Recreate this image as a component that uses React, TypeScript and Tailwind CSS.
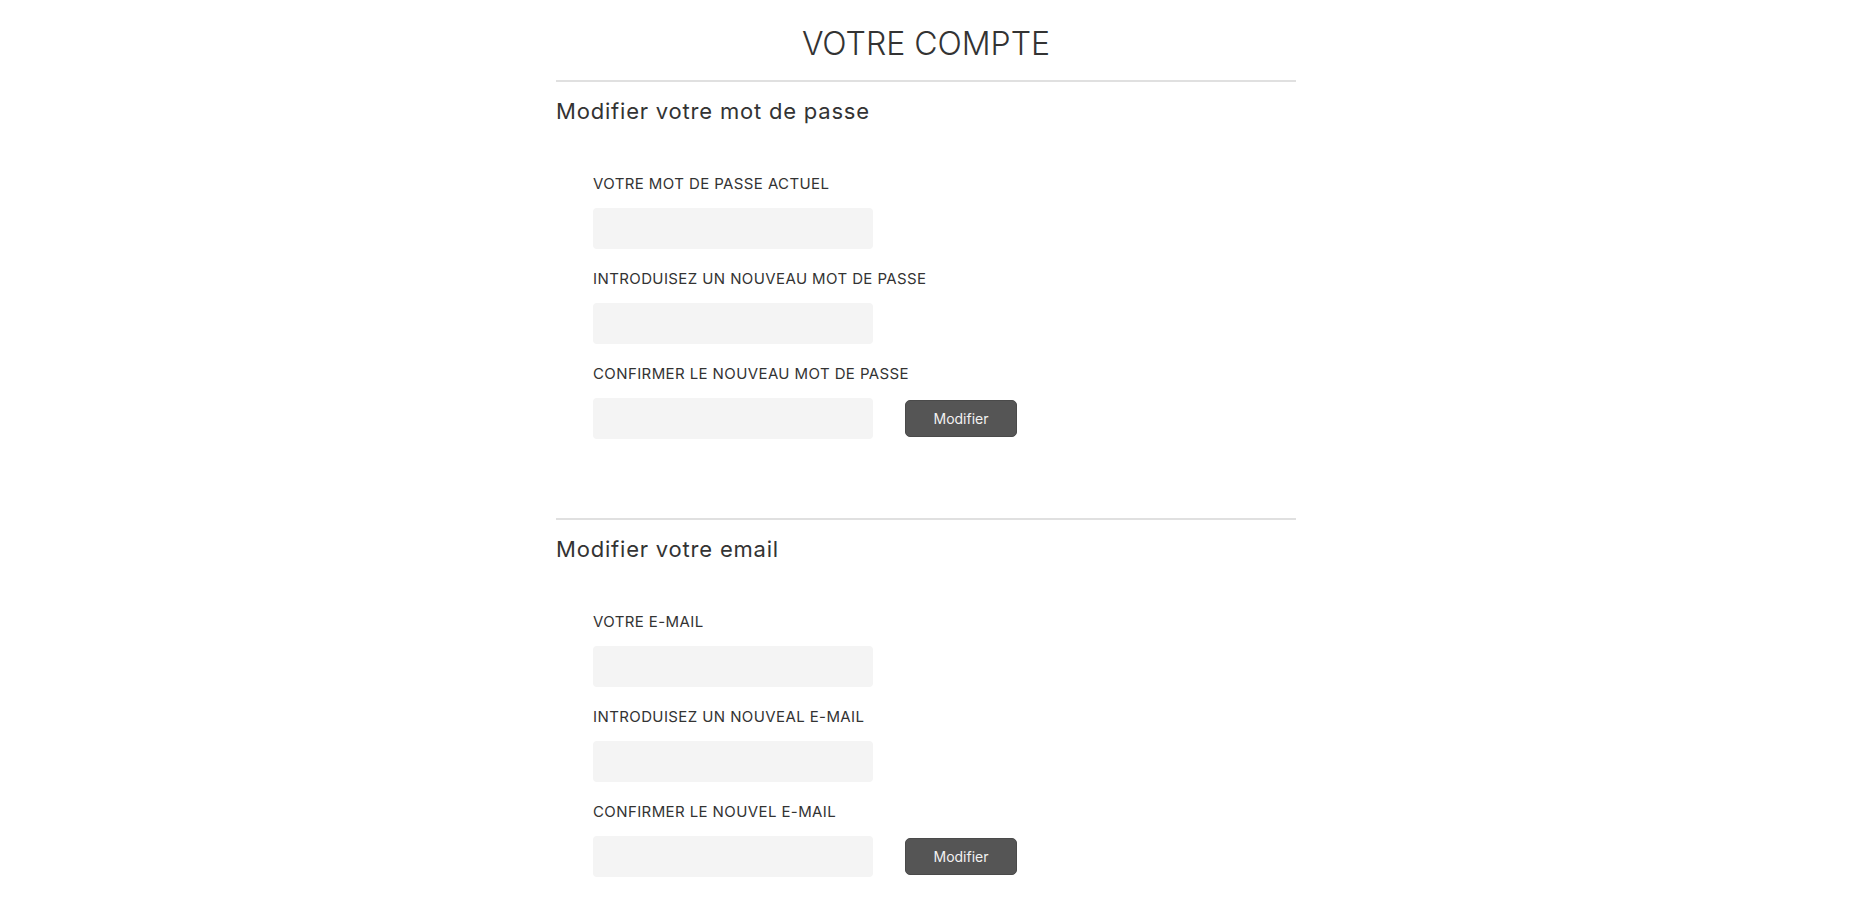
import { useState } from "react";

type Field = { label: string; type: string };

const passwordFields: Field[] = [
  { label: "VOTRE MOT DE PASSE ACTUEL", type: "password" },
  { label: "INTRODUISEZ UN NOUVEAU MOT DE PASSE", type: "password" },
  { label: "CONFIRMER LE NOUVEAU MOT DE PASSE", type: "password" },
];

const emailFields: Field[] = [
  { label: "VOTRE E-MAIL", type: "email" },
  { label: "INTRODUISEZ UN NOUVEAL E-MAIL", type: "email" },
  { label: "CONFIRMER LE NOUVEL E-MAIL", type: "email" },
];

function AccountSection({ title, fields }: { title: string; fields: Field[] }) {
  const [values, setValues] = useState<string[]>(fields.map(() => ""));

  return (
    <section className="border-t-2 border-[#e0e0e0]">
      <h2 className="pt-[15px] text-[22px] leading-[28px] tracking-[0.8px] text-[#333]">{title}</h2>
      <form
        className="pl-[37px] pt-[49px] flex flex-col gap-[20px]"
        onSubmit={(e) => e.preventDefault()}
      >
        {fields.map((field, i) => (
          <div key={field.label}>
            <label className="block text-[15px] leading-[20px] tracking-[0.4px] mb-[14px] text-[#333]">
              {field.label}
            </label>
            <div className="flex items-center">
              <input
                type={field.type}
                value={values[i]}
                onChange={(e) =>
                  setValues((prev) => prev.map((v, j) => (j === i ? e.target.value : v)))
                }
                className="w-[280px] h-[41px] rounded-[4px] bg-[#f4f4f4] px-3 text-[15px] outline-none"
              />
              {i === fields.length - 1 ? (
                <button
                  type="submit"
                  className="ml-[32px] w-[112px] h-[37px] rounded-[5px] bg-[#555] border border-[#4a4a4a] text-[14px] text-[#f2f2f2]"
                >
                  Modifier
                </button>
              ) : null}
            </div>
          </div>
        ))}
      </form>
      <div className="h-[79px]" />
    </section>
  );
}

export default function App() {
  return (
    <div className="min-h-screen bg-white font-['Inter',sans-serif] text-[#333]">
      <div className="w-[740px] mx-auto">
        <h1 className="pt-[24px] pb-[16px] text-center text-[32px] leading-[40px] font-light">
          VOTRE COMPTE
        </h1>
        <AccountSection title="Modifier votre mot de passe" fields={passwordFields} />
        <AccountSection title="Modifier votre email" fields={emailFields} />
      </div>
    </div>
  );
}
